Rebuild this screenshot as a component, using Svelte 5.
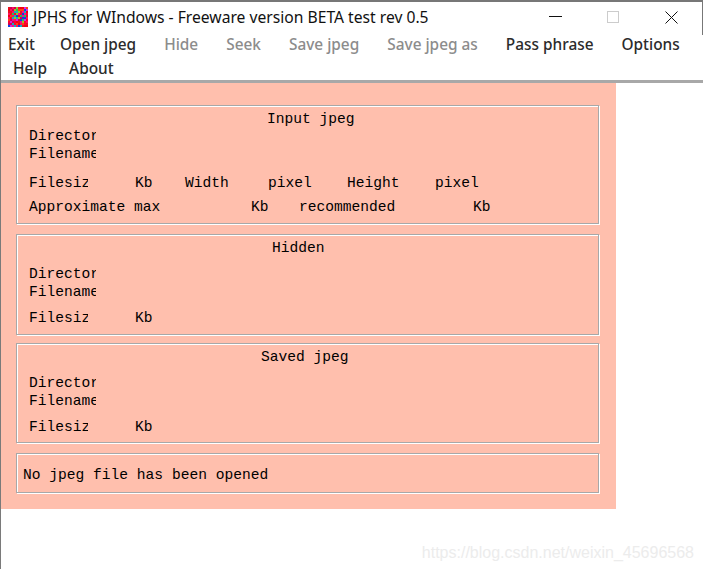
<script lang="ts">
  const menuTop = [
    { label: "Exit" },
    { label: "Open jpeg" },
    { label: "Hide", off: true },
    { label: "Seek", off: true },
    { label: "Save jpeg", off: true },
    { label: "Save jpeg as", off: true },
    { label: "Pass phrase" },
    { label: "Options" }
  ];

  // noise for the little app icon: mostly red, cooler towards the middle
  const hot = ["#f00010", "#ff0030", "#e81020", "#ff1060", "#f01090", "#ff4010", "#d00050"];
  const cool = ["#20c060", "#1040e0", "#10b0c0", "#e020e0", "#a0c020"];
  let seed = 7;
  const rand = () => (seed = (seed * 1103515245 + 12345) & 0x7fffffff) / 0x7fffffff;
  const cells = Array.from({ length: 100 }, (_, i) => {
    const x = i % 10;
    const y = Math.floor(i / 10);
    const mid = Math.hypot(x - 5, y - 3.5) < 3.5;
    const pool = rand() < (mid ? 0.6 : 0.2) ? cool : hot;
    return { x, y, fill: pool[Math.floor(rand() * pool.length)] };
  });
</script>

<div class="win">
  <header class="title">
    <svg class="icon" viewBox="0 0 10 10" width="20" height="20" shape-rendering="crispEdges">
      {#each cells as c}
        <rect x={c.x} y={c.y} width="1" height="1" fill={c.fill} />
      {/each}
    </svg>
    <span class="name">JPHS for WIndows - Freeware version BETA test rev 0.5</span>
    <div class="controls">
      <svg width="13" height="13" viewBox="0 0 13 13"><path d="M0 5.500h13" stroke="#111" fill="none" /></svg>
      <svg width="13" height="13" viewBox="0 0 13 13"><rect x="0.500" y="0.500" width="11" height="11" stroke="#ccc" fill="none" /></svg>
      <svg width="13" height="13" viewBox="0 0 13 13"><path d="M.5.5l12 12M12.500.5l-12 12" stroke="#111" fill="none" /></svg>
    </div>
  </header>

  <nav class="menu">
    <div class="menurow first">
      {#each menuTop as m}
        <span class:off={m.off}>{m.label}</span>
      {/each}
    </div>
    <div class="menurow second">
      <span>Help</span>
      <span>About</span>
    </div>
  </nav>

  <main class="panel">
    <section class="group input">
      <div class="heading">Input jpeg</div>
      <div class="clip">Directory</div>
      <div class="clip">Filename</div>
      <div class="row sizes">
        <span class="clip">Filesize</span><span>Kb</span><span>Width</span><span>pixel</span><span>Height</span><span>pixel</span>
      </div>
      <div class="row approx">
        <span>Approximate max</span><span>Kb</span><span>recommended</span><span>Kb</span>
      </div>
    </section>

    <section class="group hidden">
      <div class="heading">Hidden</div>
      <div class="clip">Directory</div>
      <div class="clip">Filename</div>
      <div class="row sizes">
        <span class="clip">Filesize</span><span>Kb</span>
      </div>
    </section>

    <section class="group saved">
      <div class="heading">Saved jpeg</div>
      <div class="clip">Directory</div>
      <div class="clip">Filename</div>
      <div class="row sizes">
        <span class="clip">Filesize</span><span>Kb</span>
      </div>
    </section>

    <section class="group status">No jpeg file has been opened</section>
  </main>

  <div class="mark">https://blog.csdn.net/weixin_45696568</div>
</div>

<style>
  :global(body) {
    background: #fff;
  }

  .win {
    position: relative;
    box-sizing: border-box;
    width: 703px;
    height: 569px;
    overflow: hidden;
    background: #fff;
    border-top: 2px solid #777;
    border-left: 1px solid #7a7a7a;
  }

  .title {
    box-sizing: border-box;
    display: flex;
    align-items: center;
    height: 33px;
    padding: 0 0 3px 7px;
    border-right: 1px solid #777;
    font: 15.670px "Noto Sans", sans-serif;
    color: #111;
  }

  .icon {
    margin-right: 5px;
  }

  .controls {
    display: flex;
    gap: 45px;
    margin-left: auto;
    margin-right: 24px;
  }

  .menu {
    height: 45px;
    font: 500 15.400px "Noto Sans", sans-serif;
    color: #2b2b2b;
    border-bottom: 3px solid #a8a8a8;
  }

  .menurow {
    display: flex;
    align-items: center;
  }

  .first {
    height: 18px;
    gap: 28px;
    padding-left: 7px;
  }

  /* "Exit" is narrower in the original UI font */
  .first span:first-child {
    margin-right: -3px;
  }

  .second {
    height: 24px;
    margin-top: 3px;
    gap: 22px;
    padding-left: 12px;
  }

  .off {
    color: #8c8c8c;
  }

  .panel {
    box-sizing: border-box;
    width: 615px;
    height: 426px;
    padding: 22px 17px 0 15px;
    background: #ffbfad;
    font: 14.600px/18px "Liberation Mono", monospace;
    color: #000;
  }

  .group {
    box-sizing: border-box;
    padding-left: 12px;
    border: 1px solid #a8a8a8;
    box-shadow: inset 1px 1px 0 #fff, 1px 1px 0 #fff;
  }

  .input {
    height: 119px;
    padding-top: 4px;
    margin-bottom: 10px;
  }

  .hidden {
    height: 101px;
    padding-top: 4px;
    margin-bottom: 8px;
  }

  .saved {
    height: 100px;
    padding-top: 4px;
    margin-bottom: 10px;
  }

  .status {
    height: 40px;
    padding: 12px 0 0 6px;
  }

  .heading {
    height: 26px;
  }

  .input .heading {
    height: 17px;
    padding-left: 238px;
  }

  .hidden .heading {
    padding-left: 243px;
  }

  .saved .heading {
    padding-left: 232px;
  }

  .clip {
    width: 67px;
    overflow: hidden;
    white-space: nowrap;
  }

  .row {
    display: grid;
    margin-top: 8px;
    height: 18px;
  }

  .input .sizes {
    margin-top: 11px;
  }

  .row .clip {
    width: 59px;
  }

  .sizes {
    grid-template-columns: 106px 50px 83px 79px 88px auto;
  }

  .approx {
    grid-template-columns: 222px 48px 174px auto;
    margin-top: 6px;
  }

  .mark {
    position: absolute;
    right: 9px;
    bottom: 7px;
    font: 16px "Liberation Sans", sans-serif;
    color: #ececec;
  }
</style>
